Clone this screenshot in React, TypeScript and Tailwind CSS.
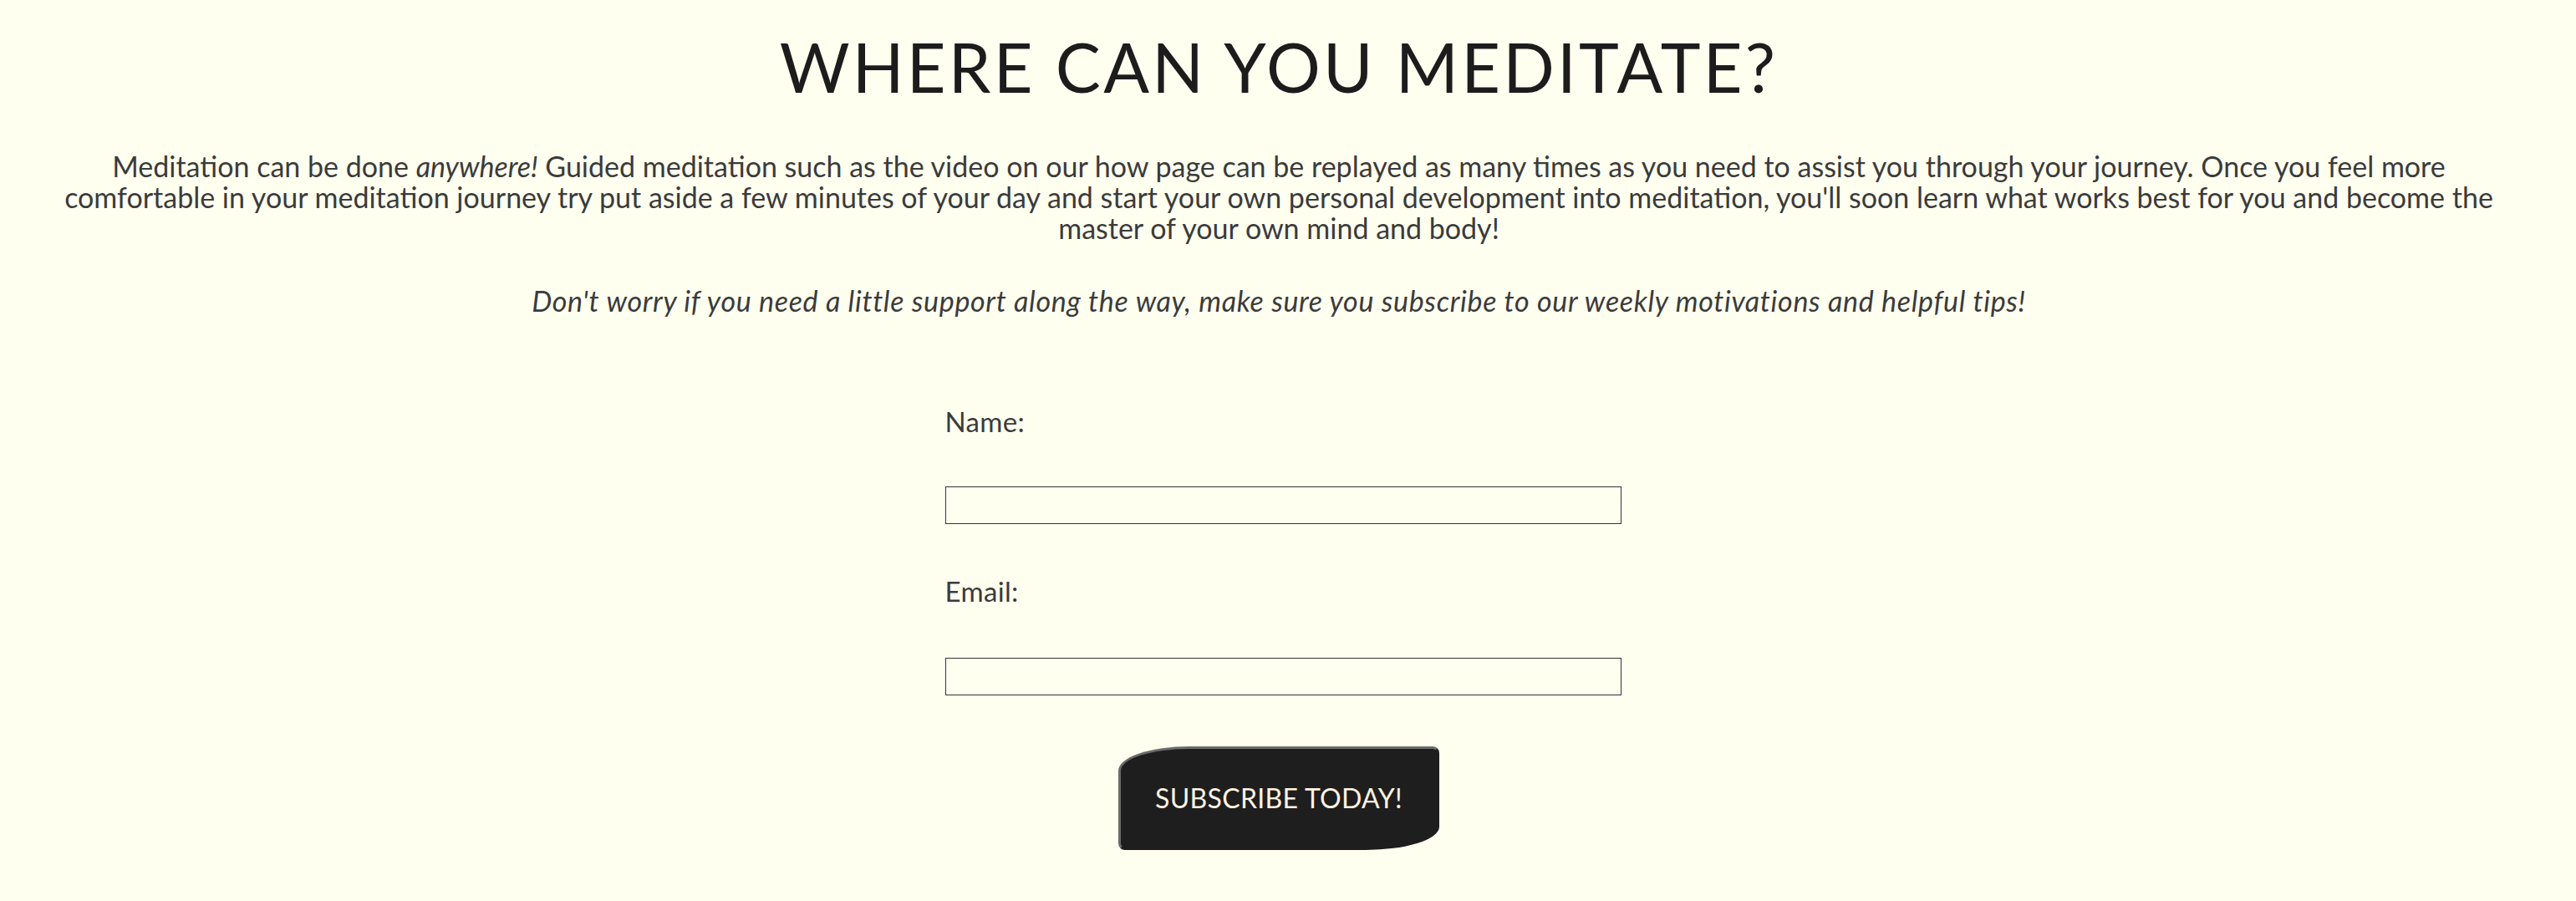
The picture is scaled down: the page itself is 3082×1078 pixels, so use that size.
export default function App() {
  return (
    <div className="min-h-screen w-full bg-[#fffff0] pr-[22px] text-center font-['Lato',sans-serif]">
      <h1 className="pt-[31px] text-[81px] font-normal leading-[97px] tracking-[0.04em] text-[#1c1c1c]">
        WHERE CAN YOU MEDITATE?
      </h1>

      <p className="mt-[52px] text-[34px] leading-[37px] text-[#3b3b3b]">
        Meditation can be done <em>anywhere!</em> Guided meditation such as the video on our how page can be replayed as
        many times as you need to assist you through your journey. Once you feel more
        <br />
        comfortable in your meditation journey try put aside a few minutes of your day and start your own personal
        development into meditation, you'll soon learn what works best for you and become the
        <br />
        master of your own mind and body!
      </p>

      <p className="mt-[50px] text-[34px] italic leading-[37px] tracking-[0.02em] text-[#3b3b3b]">
        Don't worry if you need a little support along the way, make sure you subscribe to our weekly motivations and
        helpful tips!
      </p>

      <form className="mt-[108px] flex flex-col items-center" onSubmit={(e) => e.preventDefault()}>
        <div className="ml-[10px] flex w-[809px] flex-col text-left">
          <label htmlFor="name" className="text-[33px] leading-[36px] tracking-[0.01em] text-[#3b3b3b]">
            Name:
          </label>
          <input id="name" type="text" className="mt-[60px] h-[45px] w-full border border-[#333] bg-transparent" />
          <label htmlFor="email" className="mt-[62px] text-[33px] leading-[36px] tracking-[0.01em] text-[#3b3b3b]">
            Email:
          </label>
          <input id="email" type="email" className="mt-[62px] h-[45px] w-full border border-[#333] bg-transparent" />
        </div>
        <button
          type="submit"
          className="mt-[61px] h-[124px] w-[384px] rounded-[85px_8px_88px_8px/29px_8px_28px_8px] border-[3px] border-t-[#6b6b6b] border-l-[#6b6b6b] border-r-[#1e1e1e] border-b-[#1e1e1e] bg-[#1e1e1e] text-[32px] tracking-[0.01em] text-[#fdf3e1]"
        >
          SUBSCRIBE TODAY!
        </button>
      </form>
    </div>
  );
}
